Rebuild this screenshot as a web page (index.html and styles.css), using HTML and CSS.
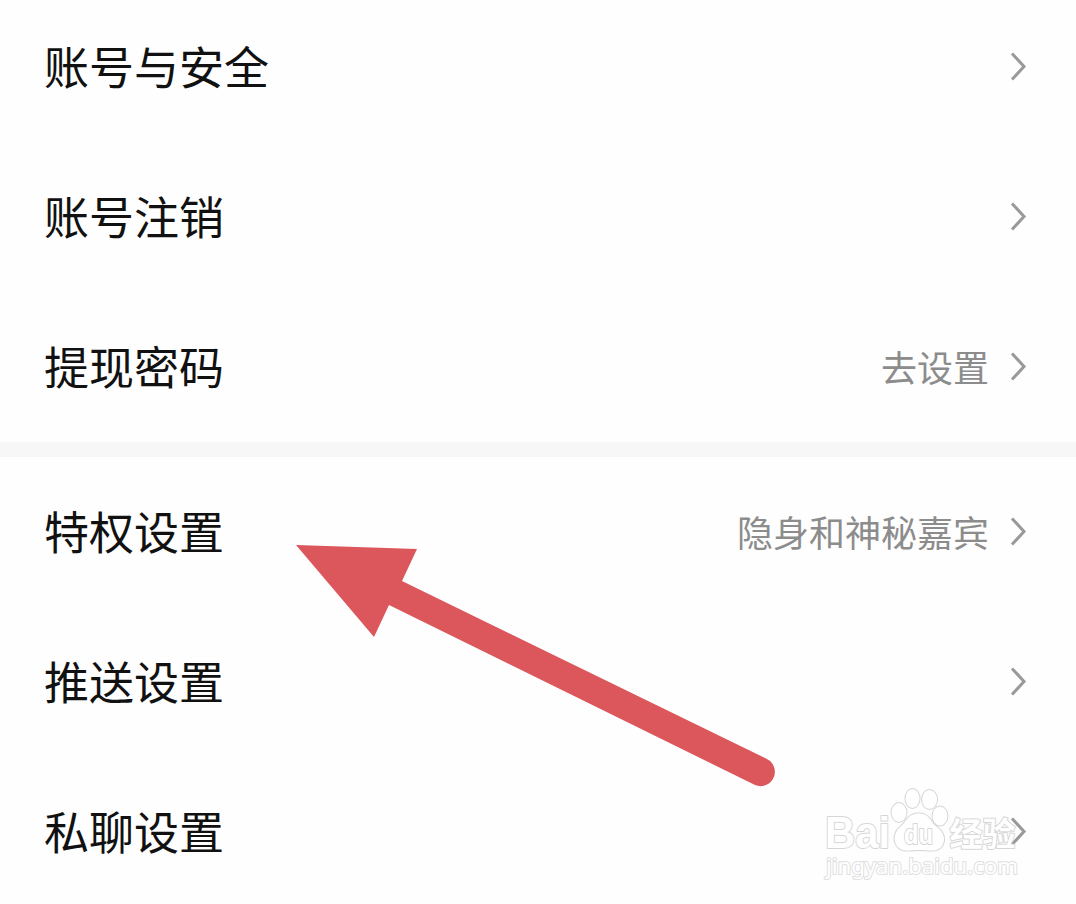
FILE: index.html
```
<!DOCTYPE html>
<html lang="zh-CN">
<head>
    <meta charset="UTF-8">
    <meta name="viewport" content="width=device-width, initial-scale=1.0">
    <title>设置</title>
    <link rel="stylesheet" href="styles.css">
</head>
<body>
    <!-- Account settings -->
    <div class="group group-first">
        <div class="row">
            <span class="label">账号与安全</span>
            <svg class="chevron" viewBox="0 0 18 32"><path d="M3 2.500L15 15.500L3 28.500"/></svg>
        </div>
        <div class="row">
            <span class="label">账号注销</span>
            <svg class="chevron" viewBox="0 0 18 32"><path d="M3 2.500L15 15.500L3 28.500"/></svg>
        </div>
        <div class="row">
            <span class="label">提现密码</span>
            <span class="value">去设置</span>
            <svg class="chevron" viewBox="0 0 18 32"><path d="M3 2.500L15 15.500L3 28.500"/></svg>
        </div>
    </div>

    <div class="divider"></div>

    <!-- Privilege, push and chat settings -->
    <div class="group">
        <div class="row">
            <span class="label">特权设置</span>
            <span class="value">隐身和神秘嘉宾</span>
            <svg class="chevron" viewBox="0 0 18 32"><path d="M3 2.500L15 15.500L3 28.500"/></svg>
        </div>
        <div class="row">
            <span class="label">推送设置</span>
            <svg class="chevron" viewBox="0 0 18 32"><path d="M3 2.500L15 15.500L3 28.500"/></svg>
        </div>
        <div class="row">
            <span class="label">私聊设置</span>
            <svg class="chevron" viewBox="0 0 18 32"><path d="M3 2.500L15 15.500L3 28.500"/></svg>
        </div>
    </div>

    <!-- Arrow pointing at the privilege row -->
    <svg class="arrow" viewBox="0 0 490 250">
        <path d="M6 5L127 9L112 41L476 218.500A14 14 0 0 1 465 245L99 65L84 97Z"/>
    </svg>

    <!-- Watermark -->
    <svg class="watermark" viewBox="0 0 210 100">
        <g class="logo">
            <text class="logo-latin" x="5" y="63" textLength="65" lengthAdjust="spacingAndGlyphs">Bai</text>
            <ellipse cx="79" cy="27.500" rx="7.500" ry="9.500"/>
            <ellipse cx="92.500" cy="13.500" rx="7" ry="9.500"/>
            <ellipse cx="109.500" cy="14.500" rx="7.500" ry="9.500"/>
            <ellipse cx="120" cy="31" rx="7.500" ry="9.500"/>
            <path d="M99 28.500C87 28.500 87 37 80 42C74 47 73 56 77 61C82 68 90 65 99 65C108 65 117 68 122 61C126 55 124 47 117 42C110 37 110 28.500 99 28.500Z"/>
            <text class="logo-du" x="84" y="59" textLength="29" lengthAdjust="spacingAndGlyphs">du</text>
            <text class="logo-cjk" x="129.500" y="61" textLength="66" lengthAdjust="spacingAndGlyphs">经验</text>
            <text class="logo-url" x="6" y="89" textLength="192" lengthAdjust="spacingAndGlyphs">jingyan.baidu.com</text>
        </g>
    </svg>
</body>
</html>
```
FILE: styles.css
```
body {
    margin: 0;
    height: 904px;
    overflow: hidden;
    position: relative;
    background-color: #fefefe;
    font-family: "Noto Sans CJK SC", sans-serif;
}

/* The list is scrolled a little past its first row */
.group-first {
    margin-top: -8px;
}

.row {
    display: flex;
    align-items: center;
    box-sizing: border-box;
    height: 150px;
    padding: 0 49px 0 44px;
}

.label {
    flex: 1;
    padding-bottom: 2px;
    font-size: 45px;
    line-height: 66px;
    color: #111;
}

.value {
    margin-right: 20px;
    padding-bottom: 2px;
    font-size: 36px;
    line-height: 54px;
    color: #8c8c8c;
}

.chevron {
    width: 18px;
    height: 32px;
    fill: none;
    stroke: #999;
    stroke-width: 3;
}

.divider {
    height: 15px;
    background-color: #f7f7f7; /* Light gray */
}

.arrow {
    position: absolute;
    left: 290px;
    top: 540px;
    width: 490px;
    height: 250px;
    fill: #db575c; /* Red */
}

.watermark {
    position: absolute;
    left: 820px;
    top: 785px;
    width: 210px;
    height: 100px;
}

.logo {
    fill: #fff;
    stroke: #d6d6d6;
    stroke-width: 2;
    stroke-linejoin: round;
    paint-order: stroke; /* Keeps only the outer half of each outline */
    font-family: "Liberation Sans", "Noto Sans CJK SC", sans-serif;
}

.logo-latin {
    font-size: 44px;
    font-weight: bold;
}

.logo-du {
    font-size: 27px;
    font-weight: bold;
}

.logo-cjk {
    font-family: "Noto Sans CJK SC", sans-serif;
    font-size: 33px;
    font-weight: bold;
}

.logo-url {
    font-family: "Noto Sans", sans-serif;
    font-size: 22px;
    stroke: #e0e0e0;
}
```
